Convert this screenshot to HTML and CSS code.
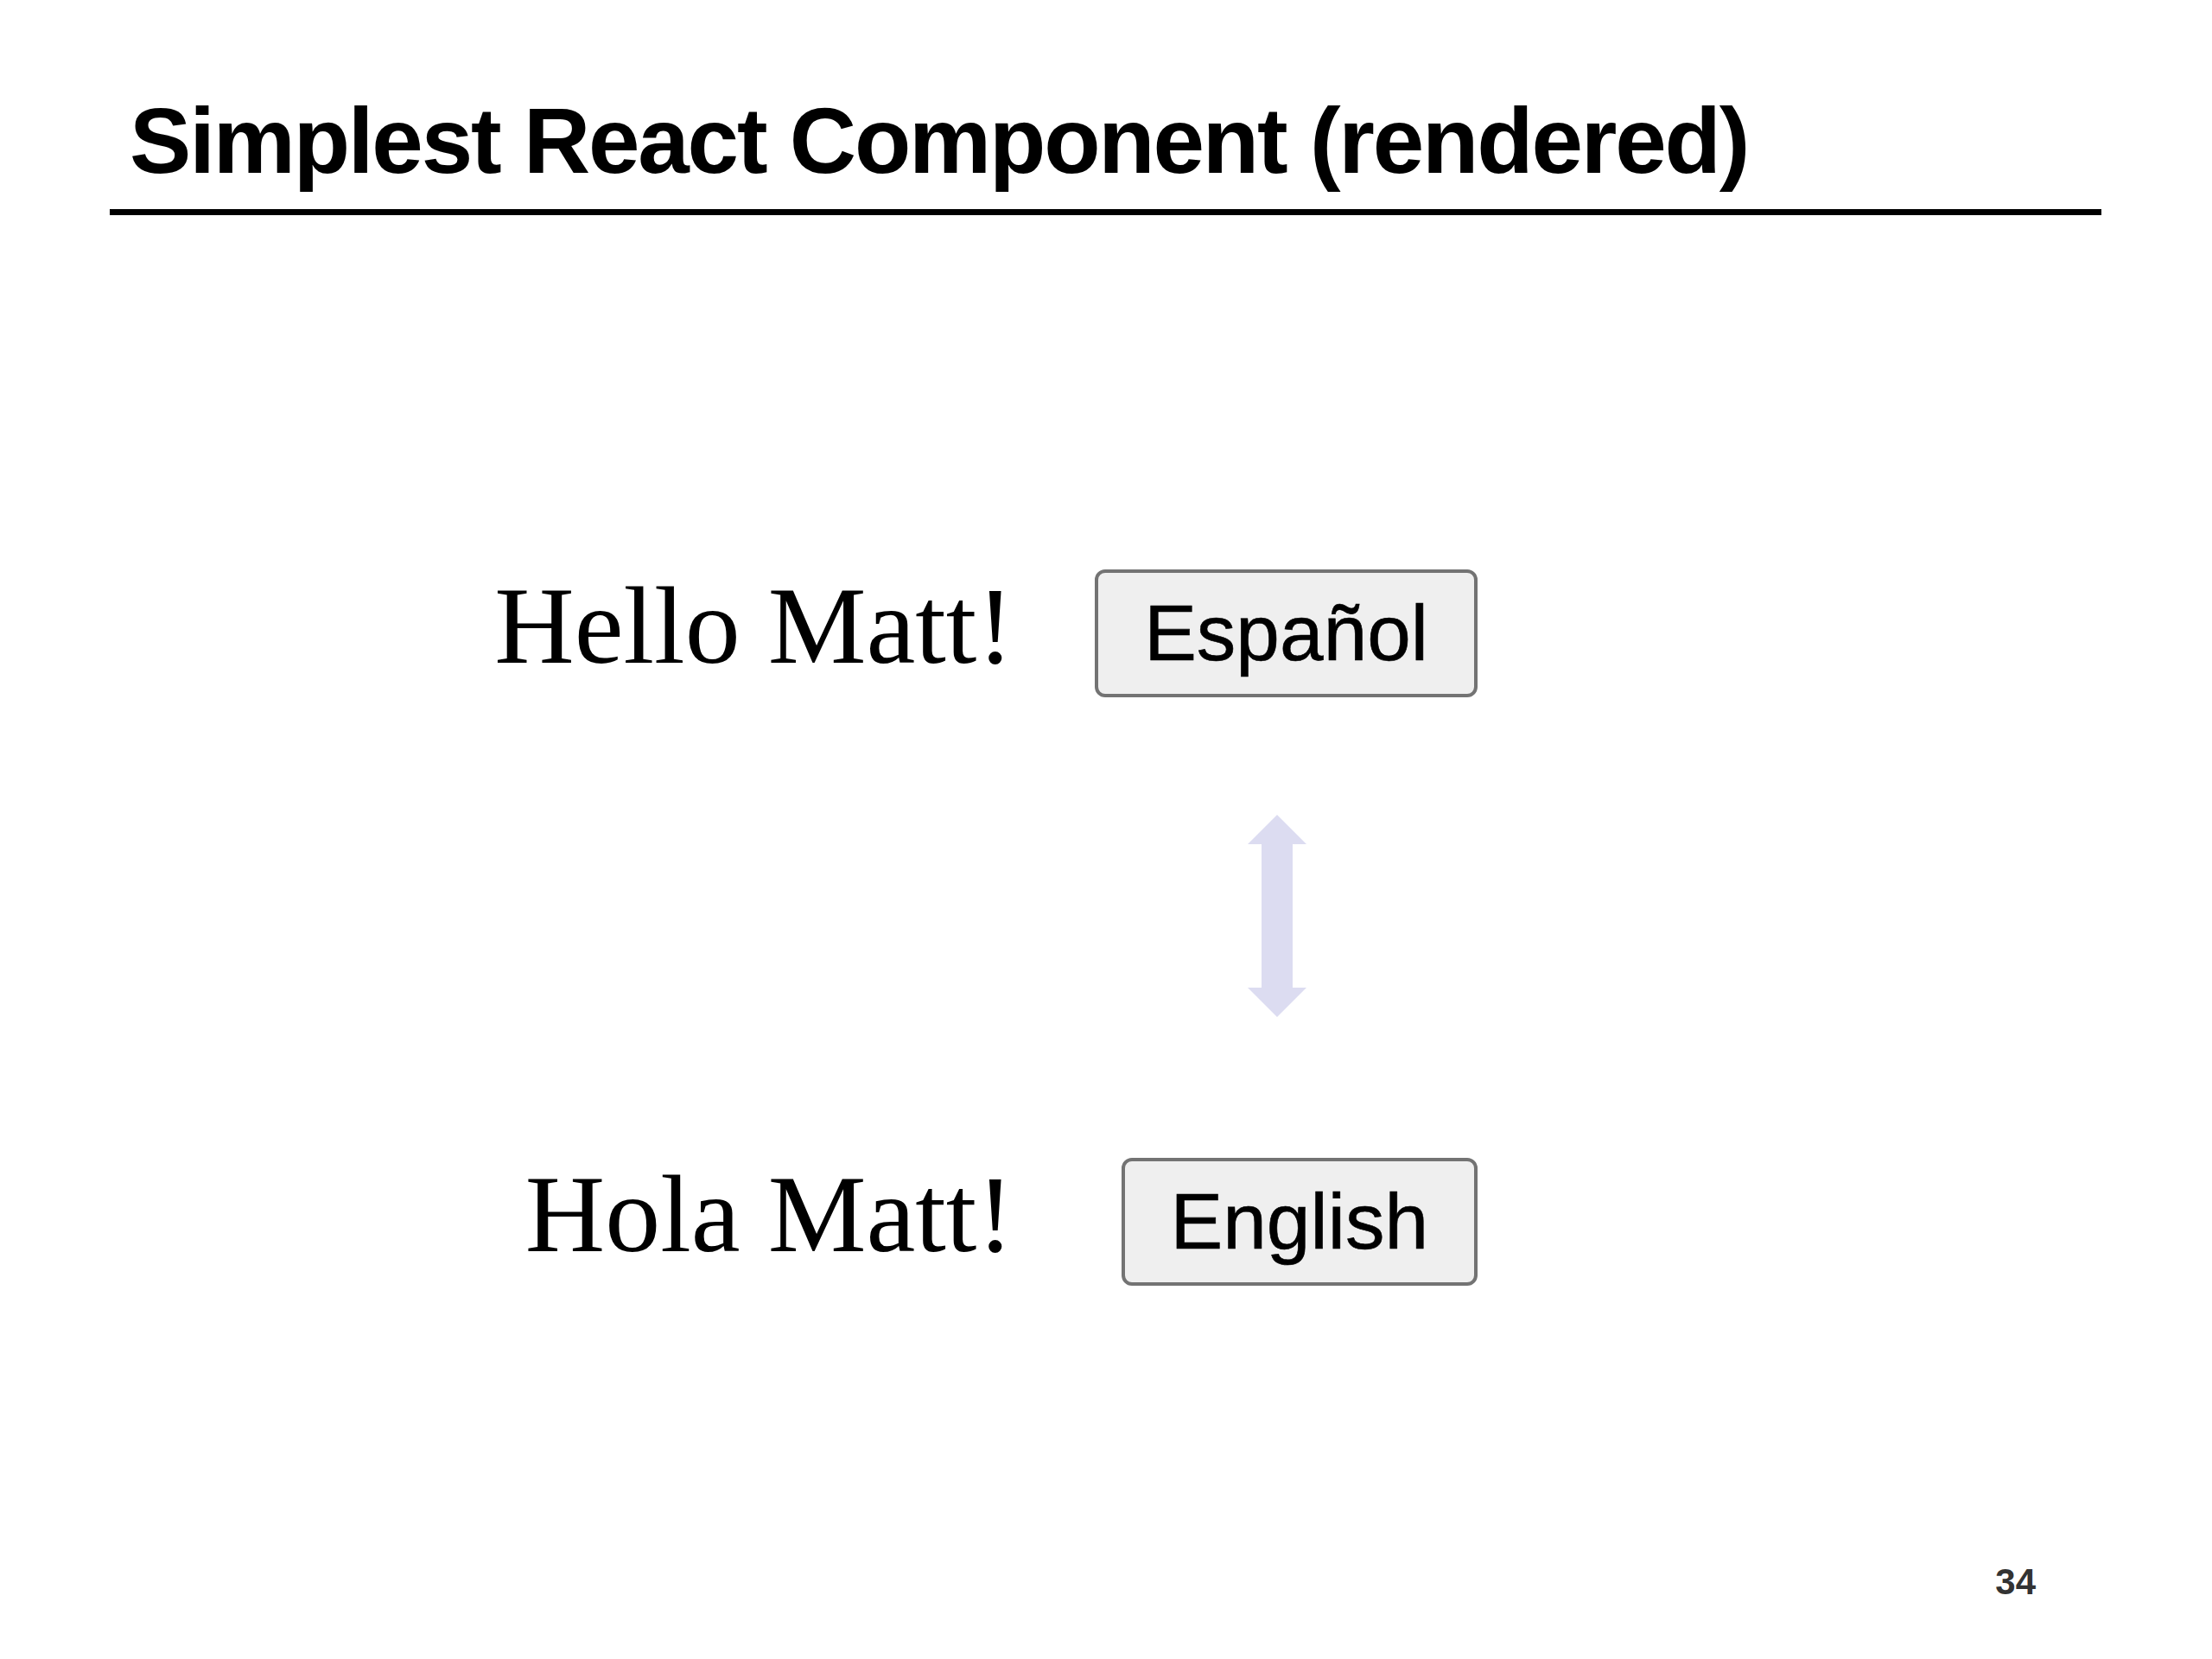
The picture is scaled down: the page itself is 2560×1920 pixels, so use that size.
FILE: index.html
```html
<!DOCTYPE html>
<html lang="en">
<head>
    <meta charset="UTF-8">
    <meta name="viewport" content="width=device-width, initial-scale=1.0">
    <title>Simplest React Component (rendered)</title>
    <link rel="stylesheet" href="styles.css">
</head>
<body>
    <div class="slide">
        <div class="slide-header">
            <h1>Simplest React Component (rendered)</h1>
        </div>

        <div class="stage">
            <p class="greeting">Hello Matt!</p>
            <button class="lang-btn">Español</button>

            <!-- toggles back and forth -->
            <svg class="toggle-arrow" width="68" height="234" viewBox="0 0 68 234">
                <path d="M34 0 L68 34 L52 34 L52 200 L68 200 L34 234 L0 200 L16 200 L16 34 L0 34 Z" fill="#dcdcf1"/>
            </svg>

            <p class="greeting">Hola Matt!</p>
            <button class="lang-btn">English</button>
        </div>

        <div class="slide-footer">34</div>
    </div>
</body>
</html>
```

FILE: styles.css
```css
body {
    margin: 0;
    background-color: white;
    font-family: "Liberation Sans", Arial, sans-serif;
}

.slide {
    min-height: 1920px;
    display: flex;
    flex-direction: column;
    box-sizing: border-box;
}

.slide-header {
    margin: 110px 128px 0 127px;
    border-bottom: 7px solid black;
    padding: 0 0 25px 23px;
}

.slide-header h1 {
    margin: 0;
    font-size: 107px;
    line-height: 1;
    font-weight: bold;
    letter-spacing: -2.2px;
    color: black;
}

.stage {
    margin-top: 410px;
    display: grid;
    grid-template-columns: 1173px 537px;
    align-items: start;
}

.greeting {
    margin: 0;
    justify-self: end;
    font-family: "Liberation Serif", "Times New Roman", serif;
    font-size: 128px;
    line-height: 130px;
    color: black;
}

.lang-btn {
    justify-self: end;
    font-family: "Liberation Sans", Arial, sans-serif;
    font-size: 91px;
    line-height: 104px;
    padding: 18px 53px;
    color: black;
    -webkit-text-stroke: 0.6px black;
    background-color: #efefef;
    border: 4px solid #737373;
    border-radius: 12px;
}

.toggle-arrow {
    grid-column: 2;
    display: block;
    margin: 136px 0 163px 271px;
}

.slide-footer {
    margin-top: auto;
    padding: 0 204px 68px 0;
    text-align: right;
    font-size: 42px;
    line-height: 1;
    font-weight: bold;
    color: #333;
}
```
